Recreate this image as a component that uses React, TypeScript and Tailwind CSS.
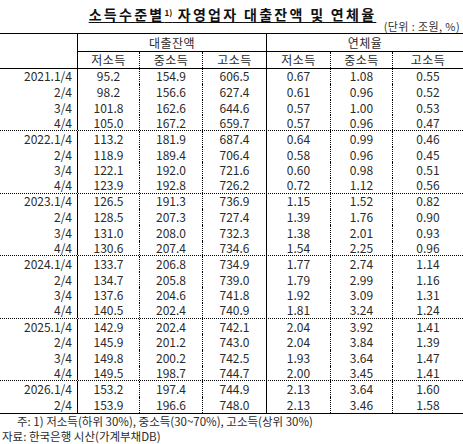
import React from 'react';

const groups: string[][][] = [
  [
    ['2021.1/4', '95.2', '154.9', '606.5', '0.67', '1.08', '0.55'],
    ['2/4', '98.2', '156.6', '627.4', '0.61', '0.96', '0.52'],
    ['3/4', '101.8', '162.6', '644.6', '0.57', '1.00', '0.53'],
    ['4/4', '105.0', '167.2', '659.7', '0.57', '0.96', '0.47'],
  ],
  [
    ['2022.1/4', '113.2', '181.9', '687.4', '0.64', '0.99', '0.46'],
    ['2/4', '118.9', '189.4', '706.4', '0.58', '0.96', '0.45'],
    ['3/4', '122.1', '192.0', '721.6', '0.60', '0.98', '0.51'],
    ['4/4', '123.9', '192.8', '726.2', '0.72', '1.12', '0.56'],
  ],
  [
    ['2023.1/4', '126.5', '191.3', '736.9', '1.15', '1.52', '0.82'],
    ['2/4', '128.5', '207.3', '727.4', '1.39', '1.76', '0.90'],
    ['3/4', '131.0', '208.0', '732.3', '1.38', '2.01', '0.93'],
    ['4/4', '130.6', '207.4', '734.6', '1.54', '2.25', '0.96'],
  ],
  [
    ['2024.1/4', '133.7', '206.8', '734.9', '1.77', '2.74', '1.14'],
    ['2/4', '134.7', '205.8', '739.0', '1.79', '2.99', '1.16'],
    ['3/4', '137.6', '204.6', '741.8', '1.92', '3.09', '1.31'],
    ['4/4', '140.5', '202.4', '740.9', '1.81', '3.24', '1.24'],
  ],
  [
    ['2025.1/4', '142.9', '202.4', '742.1', '2.04', '3.92', '1.41'],
    ['2/4', '145.9', '201.2', '743.0', '2.04', '3.84', '1.39'],
    ['3/4', '149.8', '200.2', '742.5', '1.93', '3.64', '1.47'],
    ['4/4', '149.5', '198.7', '744.7', '2.00', '3.45', '1.41'],
  ],
  [
    ['2026.1/4', '153.2', '197.4', '744.9', '2.13', '3.64', '1.60'],
    ['2/4', '153.9', '196.6', '748.0', '2.13', '3.46', '1.58'],
  ],
];

const cols = 'grid grid-cols-[78px_62px_63px_64px_64px_62px_70px]';

// right border for each value column
const sideBorder = [
  'border-r border-dotted border-black',
  'border-r border-dotted border-black',
  'border-r border-solid border-black',
  'border-r border-dotted border-black',
  'border-r border-dotted border-black',
  '',
];

const subHeads = ['저소득', '중소득', '고소득', '저소득', '중소득', '고소득'];

export default function App() {
  return (
    <div
      className="w-[463px] h-[444px] overflow-hidden bg-white text-[#2a2a2a]"
      style={{ fontFamily: '"Noto Sans CJK KR", "Noto Sans", sans-serif' }}
    >
      {/* Title */}
      <div className="h-[20px] pt-[1px] pl-[2px] text-center">
        <span className="text-[14px] leading-[16px] font-bold tracking-[2.3px] text-[#111] underline underline-offset-[2px] decoration-[1px]">
          소득수준별<sup className="text-[8px] tracking-normal">1)</sup> 자영업자 대출잔액 및 연체율
        </span>
      </div>
      <div className="h-[13px] pr-[3px] text-right text-[11px] leading-[13px] tracking-[0.4px] text-[#333]">
        (단위 : 조원, %)
      </div>

      {/* Header */}
      <div className="flex border-t border-b border-black text-[12px] leading-[14px]">
        <div className="w-[78px] shrink-0 border-r border-black" />
        <div className="flex-1">
          <div className="flex h-[18px] border-b border-black tracking-[0.5px]">
            <div className="w-[189px] flex items-center justify-center border-r border-black">대출잔액</div>
            <div className="flex-1 flex items-center justify-center">연체율</div>
          </div>
          <div className="grid grid-cols-[62px_63px_64px_64px_62px_70px] h-[15.5px] tracking-[0.5px]">
            {subHeads.map((h, i) => (
              <div key={i} className={`flex items-center justify-center ${sideBorder[i]}`}>
                {h}
              </div>
            ))}
          </div>
        </div>
      </div>

      {/* Body */}
      <div className="border-b border-black text-[12px] leading-[14px]">
        {groups.map((rows, gi) => (
          <div key={gi} className={gi < groups.length - 1 ? 'border-b border-dotted border-black' : ''}>
            {rows.map((row, ri) => (
              <div key={ri} className={`${cols} ${ri === rows.length - 1 && gi < groups.length - 1 ? 'h-[14.65px]' : 'h-[15.65px]'}`}>
                <div className="flex items-center justify-end pr-[5px] border-r border-black">{row[0]}</div>
                {row.slice(1).map((v, ci) => (
                  <div key={ci} className={`flex items-center justify-center ${sideBorder[ci]}`}>
                    {v}
                  </div>
                ))}
              </div>
            ))}
          </div>
        ))}
      </div>

      {/* Notes */}
      <div className="text-[11.5px] leading-[15px] text-[#2a2a2a]">
        <p className="pl-[17px] whitespace-nowrap">주: 1) 저소득(하위 30%), 중소득(30~70%), 고소득(상위 30%)</p>
        <p className="pl-[2px] whitespace-nowrap">자료: 한국은행 시산(가계부채DB)</p>
      </div>
    </div>
  );
}
